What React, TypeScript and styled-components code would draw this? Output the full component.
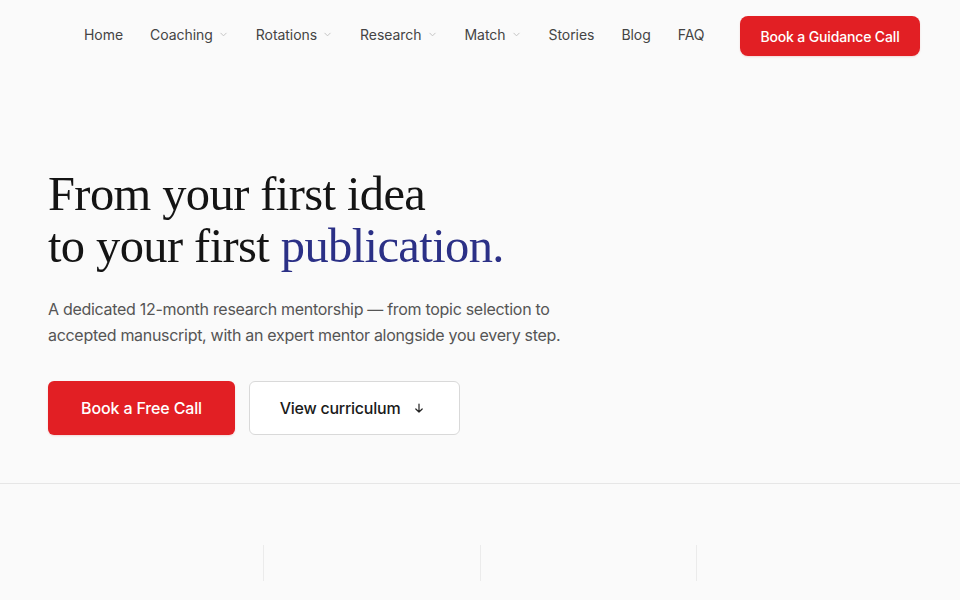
import React from "react";
import styled, { createGlobalStyle } from "styled-components";

const GlobalStyle = createGlobalStyle`
  html, body {
    margin: 0;
    padding: 0;
    background: #fafafa;
  }
  body {
    font-family: Inter, "Noto Sans", sans-serif;
    color: #1a1a1a;
    -webkit-font-smoothing: antialiased;
  }
  * {
    box-sizing: border-box;
  }
`;

const Page = styled.div`
  width: 960px;
  height: 600px;
  overflow: hidden;
  background: #fafafa;
`;

const NavBar = styled.header`
  display: flex;
  align-items: center;
  height: 72px;
  padding: 0 40px 0 84px;
`;

const NavList = styled.nav`
  display: flex;
  align-items: center;
  gap: 27px;
  flex: 1;
  margin-bottom: 3px;
`;

const NavItem = styled.a<{ $menu?: boolean }>`
  display: inline-flex;
  align-items: center;
  gap: 6px;
  font-size: 14px;
  color: #444;
  text-decoration: none;
  letter-spacing: -0.05px;
  margin-right: ${(p) => (p.$menu ? "1px" : "0")};
`;

const Chevron = () => (
  <svg width="9" height="9" viewBox="0 0 10 10" fill="none">
    <path d="M2 3.5 L5 6.5 L8 3.5" stroke="#c4c4c4" strokeWidth="1.1" strokeLinecap="round" strokeLinejoin="round" />
  </svg>
);

const PrimaryButton = styled.a<{ $size?: "sm" | "lg" }>`
  display: inline-flex;
  align-items: center;
  justify-content: center;
  background: #e21f24;
  color: #fff;
  text-decoration: none;
  font-weight: 500;
  letter-spacing: -0.15px;
  border-radius: ${(p) => (p.$size === "lg" ? "6px" : "8px")};
  font-size: ${(p) => (p.$size === "lg" ? "16px" : "14px")};
  width: ${(p) => (p.$size === "lg" ? "187px" : "180px")};
  height: ${(p) => (p.$size === "lg" ? "54px" : "40px")};
  box-shadow: 0 1px 2px rgba(200, 20, 20, 0.15);
`;

const SecondaryButton = styled.a`
  display: inline-flex;
  align-items: center;
  justify-content: center;
  gap: 13px;
  width: 211px;
  height: 54px;
  padding-right: 4px;
  background: #fff;
  border: 1px solid #d9d9d9;
  border-radius: 6px;
  color: #1a1a1a;
  font-size: 16px;
  font-weight: 500;
  letter-spacing: -0.25px;
  text-decoration: none;
`;

const Hero = styled.section`
  padding: 96px 48px 48px;
  border-bottom: 1px solid #e6e6e6;
`;

const Headline = styled.h1`
  margin: 0;
  font-family: "Liberation Serif", "DejaVu Serif", serif;
  font-weight: 400;
  font-size: 48.5px;
  line-height: 52px;
  letter-spacing: -0.6px;
  color: #141414;
`;

const Accent = styled.span`
  color: #2b3086;
`;

const Lead = styled.p`
  margin: 24px 0 0;
  font-size: 16px;
  line-height: 26px;
  color: #555;
  max-width: 540px;
  letter-spacing: -0.3px;
`;

const Actions = styled.div`
  display: flex;
  gap: 14px;
  margin-top: 33px;
`;

const Stats = styled.section`
  display: grid;
  grid-template-columns: 263px 217px 216px 1fr;
  padding-top: 61px;
`;

const StatCell = styled.div<{ $divider?: boolean }>`
  height: 36px;
  border-left: ${(p) => (p.$divider ? "1px solid #ebebeb" : "none")};
`;

const ArrowDown = () => (
  <svg width="12" height="12" viewBox="0 0 12 12" fill="none">
    <path d="M6 2 V10 M2.8 7 L6 10 L9.2 7" stroke="#222" strokeWidth="1.2" strokeLinecap="round" strokeLinejoin="round" />
  </svg>
);

const navLinks = [
  { label: "Home" },
  { label: "Coaching", menu: true },
  { label: "Rotations", menu: true },
  { label: "Research", menu: true },
  { label: "Match", menu: true },
  { label: "Stories" },
  { label: "Blog" },
  { label: "FAQ" },
];

export default function App() {
  return (
    <Page>
      <GlobalStyle />
      <NavBar>
        <NavList>
          {navLinks.map((l) => (
            <NavItem key={l.label} href="#" $menu={l.menu}>
              {l.label}
              {l.menu && <Chevron />}
            </NavItem>
          ))}
        </NavList>
        <PrimaryButton href="#" $size="sm">
          Book a Guidance Call
        </PrimaryButton>
      </NavBar>
      <Hero>
        <Headline>
          From your first idea
          <br />
          to your first <Accent>publication.</Accent>
        </Headline>
        <Lead>
          A dedicated 12-month research mentorship — from topic selection to accepted manuscript, with an expert
          mentor alongside you every step.
        </Lead>
        <Actions>
          <PrimaryButton href="#" $size="lg">
            Book a Free Call
          </PrimaryButton>
          <SecondaryButton href="#">
            View curriculum <ArrowDown />
          </SecondaryButton>
        </Actions>
      </Hero>
      <Stats>
        <StatCell />
        <StatCell $divider />
        <StatCell $divider />
        <StatCell $divider />
      </Stats>
    </Page>
  );
}
